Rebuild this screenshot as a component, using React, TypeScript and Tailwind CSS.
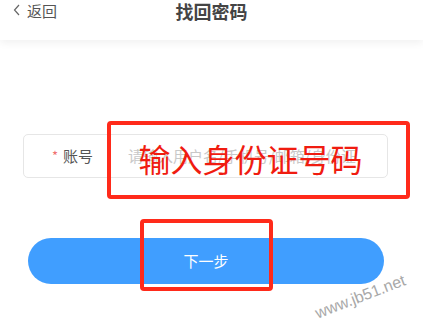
import React from 'react';

const cjk = { fontFamily: '"Noto Sans CJK SC", "Noto Sans", sans-serif' };

export default function App() {
  return (
    <div className="relative w-[423px] h-[332px] overflow-hidden bg-white" style={cjk}>
      <div className="relative h-[40px] flex items-center bg-white shadow-[0_3px_8px_rgba(0,0,0,0.06)]">
        <div className="flex items-center pl-[12px] text-[15px] text-[#555] leading-none -mt-[20px]">
          <svg width="10" height="14" viewBox="0 0 10 14" className="mr-[5px]">
            <path d="M7 2 L2.5 7 L7 12" fill="none" stroke="#666" strokeWidth="1.2" />
          </svg>
          <span>返回</span>
        </div>
        <div className="absolute left-0 right-0 top-0 text-center text-[18px] font-bold text-[#444] leading-[22px]">
          找回密码
        </div>
      </div>

      <div className="pt-[94px] px-[23px]">
        <div className="h-[44px] w-[365px] flex items-center border border-[#e6e6e6] rounded-[5px]">
          <div className="w-[104px] flex items-center pl-[28px] text-[15px] text-[#555]">
            <span className="text-[#f07070] mr-[5px] text-[13px]">*</span>
            <span>账号</span>
          </div>
          <span className="text-[15px] text-[#c8c8c8] whitespace-nowrap overflow-hidden">
            请输入用户名/手机号/邮箱/身份证
          </span>
        </div>

        <button className="mt-[60px] ml-[5px] w-[356px] h-[46px] rounded-full bg-[#409eff] text-white text-[15px]">
          下一步
        </button>
      </div>

      <div className="absolute left-[107px] top-[121px] w-[303px] h-[78px] border-[4px] border-[#ff2a1a] rounded-[4px] flex items-center justify-center">
        <span className="text-[32px] text-[#f01c10] leading-none -ml-[16px] -mt-[4px]">输入身份证号码</span>
      </div>

      <div className="absolute left-[140px] top-[219px] w-[133px] h-[72px] border-[4px] border-[#ff2a1a] rounded-[4px]" />

      <div
        className="absolute left-[316px] top-[306px] text-[16px] text-[#a8a8a8] -rotate-[21deg] origin-left leading-none"
        style={{ fontFamily: '"Liberation Sans", Arial, sans-serif' }}
      >
        www.jb51.net
      </div>
    </div>
  );
}
